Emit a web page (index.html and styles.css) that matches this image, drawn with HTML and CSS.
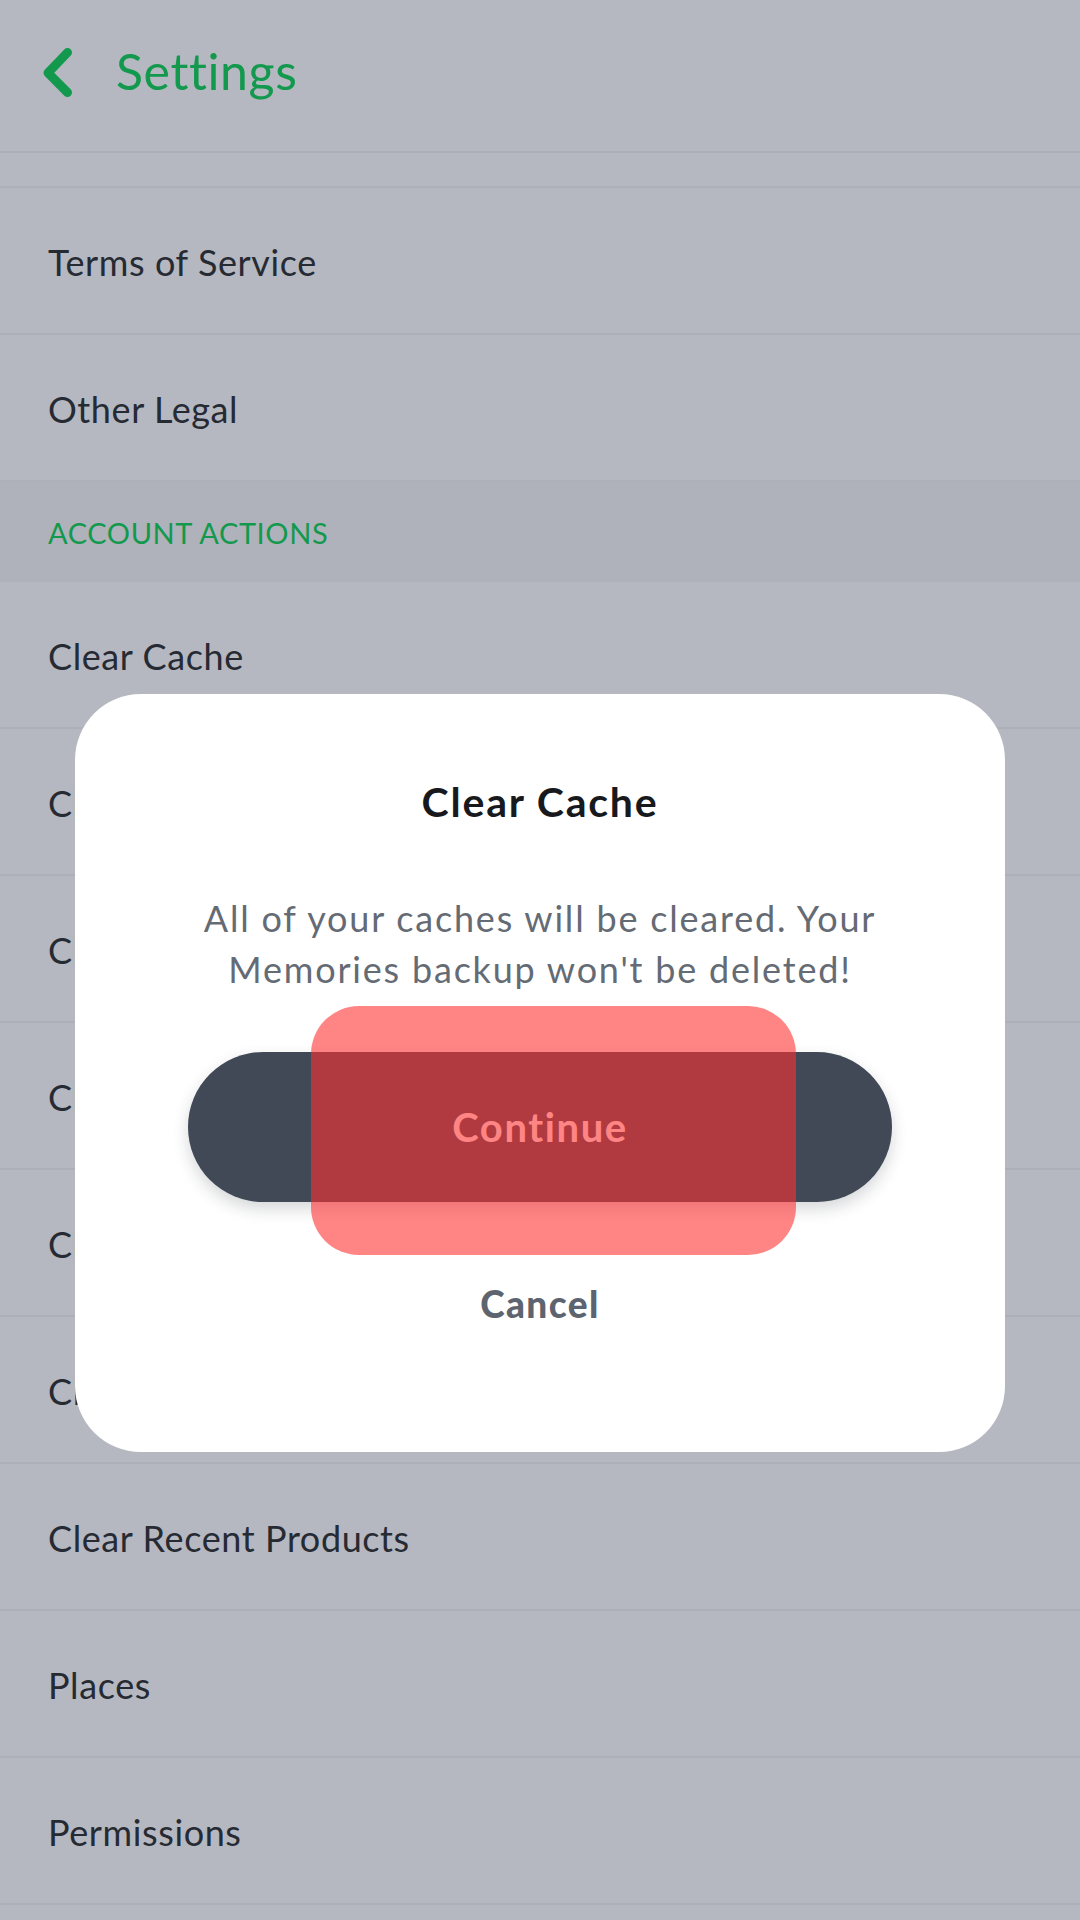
FILE: index.html
```html
<!DOCTYPE html>
<html lang="en">
<head>
<meta charset="utf-8">
<title>Settings</title>
<link rel="stylesheet" href="styles.css">
</head>
<body>
<div class="app">
  <header class="topbar">
    <svg class="back" width="30" height="50" viewBox="0 0 30 50" aria-hidden="true">
      <path d="M24.5 4.5 L5 24.8 L24.5 44.5" fill="none" stroke="#12994d" stroke-width="9" stroke-linecap="round" stroke-linejoin="round"/>
    </svg>
    <h1 class="title">Settings</h1>
  </header>
  <div class="list">
    <div class="row stub"></div>
    <div class="row"><span>Terms of Service</span></div>
    <div class="row"><span>Other Legal</span></div>
    <div class="section"><span>ACCOUNT ACTIONS</span></div>
    <div class="row first"><span>Clear Cache</span></div>
    <div class="row"><span>Clear Conversations</span></div>
    <div class="row"><span>Clear Search History</span></div>
    <div class="row"><span>Clear Top Locations</span></div>
    <div class="row"><span>Clear Scan History</span></div>
    <div class="row"><span>Clear Lens Data</span></div>
    <div class="row"><span>Clear Recent Products</span></div>
    <div class="row"><span>Places</span></div>
    <div class="row"><span>Permissions</span></div>
  </div>

  <div class="modal" role="dialog">
    <h2 class="modal-title">Clear Cache</h2>
    <p class="modal-text">All of your caches will be cleared. Your<br>Memories backup won't be deleted!</p>
    <div class="btn-wrap">
      <div class="btn">Continue</div>
      <div class="highlight"></div>
    </div>
    <div class="cancel">Cancel</div>
  </div>
</div>
</body>
</html>
```

FILE: styles.css
```css
* { box-sizing: border-box; }
html, body {
  margin: 0;
  padding: 0;
}
body {
  width: 1080px;
  height: 1920px;
  overflow: hidden;
  background: #b5b8c0;
  font-family: "Lato", "Open Sans", sans-serif;
}
.app {
  position: relative;
  width: 1080px;
  height: 1920px;
  overflow: hidden;
  background: #b5b8c0;
}
.topbar {
  height: 153px;
  display: flex;
  align-items: flex-start;
  padding-left: 43px;
  border-bottom: 2px solid #abaeb6;
}
.back {
  margin-top: 48px;
  flex: none;
}
.title {
  margin: 0 0 0 43px;
  font-size: 50px;
  line-height: 60px;
  margin-top: 41px;
  font-weight: 400;
  color: #12994d;
  letter-spacing: 0.6px;
}
.list {
  display: flex;
  flex-direction: column;
}
.row {
  height: 147px;
  display: flex;
  align-items: center;
  padding-left: 48px;
  border-bottom: 2px solid #adb0b8;
  font-size: 36px;
  letter-spacing: 0.6px;
  color: #262a33;
  flex: none;
}
.row span { padding-top: 2px; }
.row.stub {
  height: 35px;
}
.section {
  height: 100px;
  display: flex;
  align-items: center;
  padding-left: 48px;
  background: #afb2ba;
  font-size: 29px;
  letter-spacing: 0.6px;
  color: #12994d;
  flex: none;
}

.modal {
  position: absolute;
  left: 75px;
  top: 694px;
  width: 930px;
  height: 758px;
  background: #ffffff;
  border-radius: 66px;
  display: flex;
  flex-direction: column;
  align-items: center;
  padding-top: 84px;
}
.modal-title {
  margin: 0;
  font-size: 41px;
  line-height: 48px;
  font-weight: 700;
  letter-spacing: 1.8px;
  color: #17191d;
}
.modal-text {
  margin: 67px 0 0;
  font-size: 36px;
  line-height: 51px;
  letter-spacing: 1.8px;
  color: #656b74;
  text-align: center;
}
.btn-wrap {
  position: relative;
  margin-top: 57px;
  width: 704px;
  height: 150px;
}
.btn {
  width: 704px;
  height: 150px;
  border-radius: 75px;
  background: #414956;
  color: #ffffff;
  font-size: 40px;
  font-weight: 700;
  letter-spacing: 1.6px;
  display: flex;
  align-items: center;
  justify-content: center;
  box-shadow: 0 7px 16px rgba(30, 35, 45, 0.18);
}
.highlight {
  position: absolute;
  left: 123px;
  top: -46px;
  width: 485px;
  height: 249px;
  border-radius: 48px;
  background: rgba(255, 48, 48, 0.59);
}
.cancel {
  margin-top: 80px;
  font-size: 37px;
  line-height: 44px;
  font-weight: 900;
  letter-spacing: 1.4px;
  color: #5d6470;
}
```
